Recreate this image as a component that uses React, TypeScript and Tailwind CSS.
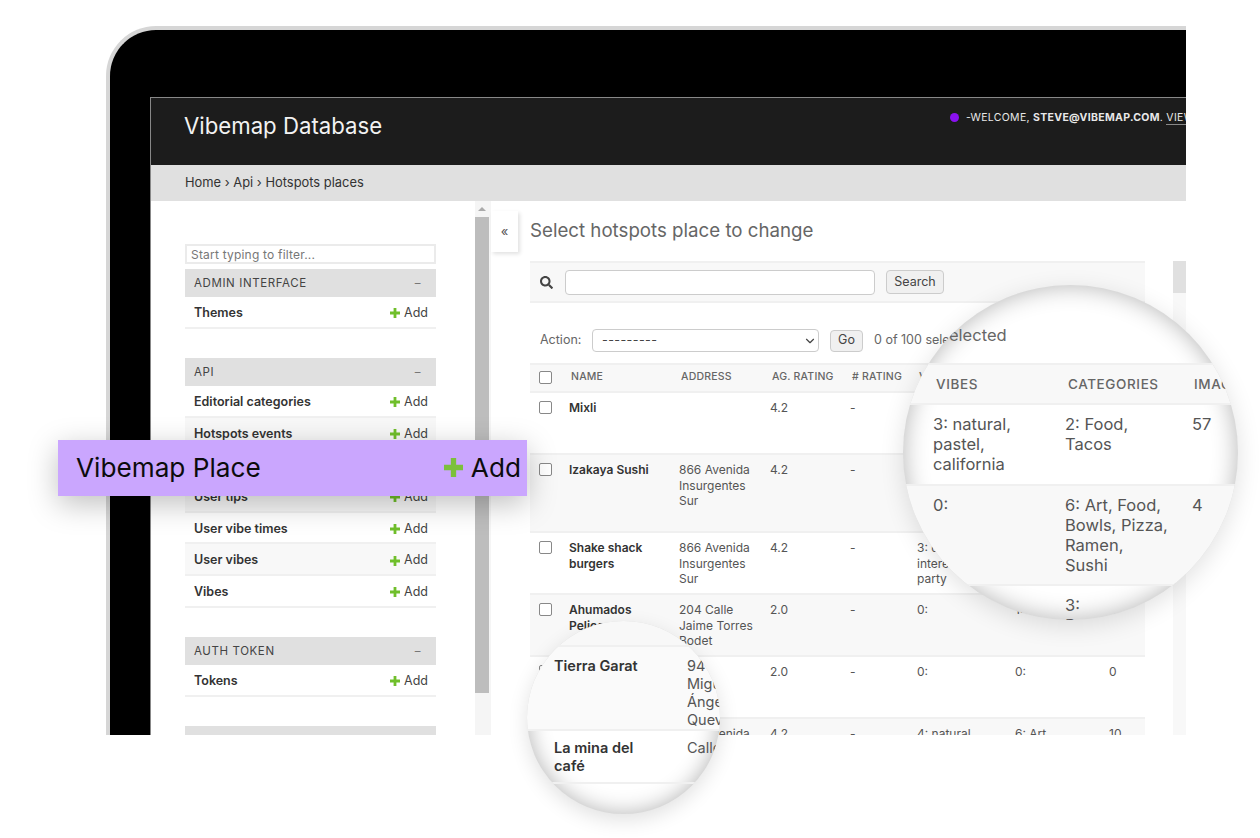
import { ChevronDown } from "lucide-react"
import { FaSearch } from "react-icons/fa"

type Row = {
  name: string[]
  address: string[]
  rating: string
  count: string
  vibes: string[]
  categories: string[]
  images: string
  height: string
  shaded: boolean
}

const rows: Row[] = [
  { name: ["Mixli"], address: [], rating: "4.2", count: "-", vibes: ["3: natural,", "pastel,", "california"], categories: ["2: Food,", "Tacos"], images: "57", height: "h-[62px]", shaded: false },
  { name: ["Izakaya Sushi"], address: ["866 Avenida", "Insurgentes", "Sur"], rating: "4.2", count: "-", vibes: ["0:"], categories: ["6: Art, Food,", "Bowls, Pizza,", "Ramen,", "Sushi"], images: "4", height: "h-[78px]", shaded: true },
  { name: ["Shake shack", "burgers"], address: ["866 Avenida", "Insurgentes", "Sur"], rating: "4.2", count: "-", vibes: ["3: dreamy,", "interesting,", "party"], categories: ["1: Food"], images: "3", height: "h-[62px]", shaded: false },
  { name: ["Ahumados", "Pelicanos"], address: ["204 Calle", "Jaime Torres", "Bodet"], rating: "2.0", count: "-", vibes: ["0:"], categories: ["1: Store,"], images: "0", height: "h-[62px]", shaded: true },
  { name: ["Tierra Garat"], address: [], rating: "2.0", count: "-", vibes: ["0:"], categories: ["0:"], images: "0", height: "h-[62px]", shaded: false },
  { name: ["La mina del", "café"], address: ["866 Avenida", "Insurgentes"], rating: "4.2", count: "-", vibes: ["4: natural,"], categories: ["6: Art,"], images: "10", height: "h-[62px]", shaded: true },
]

const sections = [
  { title: "ADMIN INTERFACE", items: ["Themes"] },
  { title: "API", items: ["Editorial categories", "Hotspots events", "Vibemap Place", "User tips", "User vibe times", "User vibes", "Vibes"] },
  { title: "AUTH TOKEN", items: ["Tokens"] },
  { title: "AUTHENTICATION", items: ["Groups"] },
]

const fontStack = "font-['Inter','Liberation_Sans',sans-serif]"

function Plus({ className }: { className: string }) {
  return (
    <svg viewBox="0 0 10 10" className={className}>
      <path d="M3.6 0h2.8v3.6H10v2.8H6.4V10H3.6V6.4H0V3.6h3.6z" fill="currentColor" />
    </svg>
  )
}

function Lines({ lines }: { lines: string[] }) {
  return (
    <>
      {lines.map((line) => (
        <div key={line}>{line}</div>
      ))}
    </>
  )
}

function Sidebar() {
  return (
    <div className="flex w-[340px] shrink-0">
      <div className="w-[324px] pl-[34px] pt-[43px]">
        <input
          placeholder="Start typing to filter..."
          className="block h-[20px] w-[251px] border-2 border-[#ebebeb] px-1 text-[12px] tracking-[0.2px] outline-none placeholder:text-[#777]"
        />
        <div className="mt-[5px] w-[251px]">
          {sections.map((section) => (
            <div key={section.title} className="mb-[29.3px]">
              <div className="flex h-[28px] items-center justify-between bg-[#e0e0e0] pl-[9px] pr-[15px] pt-[2px] text-[11.5px] tracking-[0.6px] text-[#444]">
                <span>{section.title}</span>
                <span className="text-[#777]">–</span>
              </div>
              {section.items.map((item, i) => (
                <div
                  key={item}
                  className={`flex h-[31.7px] items-center justify-between border-b-2 border-[#f0f0f0] pl-[9px] pr-[8px] pt-[3px] text-[12.5px] ${i % 2 === 1 ? "bg-[#f8f8f8]" : "bg-white"}`}
                >
                  <span className="font-semibold text-[#333]">{item}</span>
                  <span className="flex items-center gap-[4px] text-[#444]">
                    <Plus className="h-[10px] w-[10px] text-[#70bf2b]" />
                    Add
                  </span>
                </div>
              ))}
            </div>
          ))}
        </div>
      </div>
      <div className="flex h-[700px] w-[16px] flex-col items-start bg-[#f5f5f5]">
        <div className="ml-[3px] mt-[6px] h-0 w-0 border-x-[4px] border-b-[4px] border-x-transparent border-b-[#aaa]" />
        <div className="mt-[6px] h-[476px] w-[14px] bg-[#bdbdbd]" />
      </div>
    </div>
  )
}

function ChangeList() {
  return (
    <div className="relative flex-1 pl-[39px]">
      <div className="absolute left-0 top-[10px] flex h-[41px] w-[27px] items-center justify-center bg-white text-[13px] text-[#555] shadow-[2px_2px_4px_rgba(0,0,0,0.12)]">
        «
      </div>
      <h1 className="pt-[17px] text-[18.7px] leading-[25px] text-[#666]">Select hotspots place to change</h1>

      <div className="mt-[18px] flex h-[42px] w-[615px] items-center border-b-2 border-t-2 border-[#f0f0f0] bg-[#f8f8f8] pl-[10px]">
        <FaSearch className="h-[13px] w-[13px] text-[#444]" />
        <input className="ml-[12px] h-[25px] w-[310px] rounded-[4px] border border-[#ccc] bg-white outline-none" />
        <div className="ml-[11px] flex h-[24px] w-[58px] items-center justify-center rounded-[4px] border border-[#ccc] bg-[#f0f0f0] text-[12.5px] text-[#444]">
          Search
        </div>
      </div>

      <div className="mt-[26px] flex h-[23px] w-[615px] items-center pl-[10px] text-[12.5px] text-[#666]">
        <span className="w-[52px]">Action:</span>
        <div className="flex h-[23px] w-[227px] items-center justify-between rounded-[4px] border border-[#ccc] bg-white pl-[9px] pr-[1px] text-[#444]">
          <span className="tracking-[0.4px]">---------</span>
          <ChevronDown className="h-[14px] w-[14px]" />
        </div>
        <div className="ml-[11px] flex h-[22px] w-[33px] items-center justify-center rounded-[4px] border border-[#ccc] bg-[#f0f0f0] text-[#444]">
          Go
        </div>
        <span className="ml-[11px]">0 of 100 selected</span>
      </div>

      <div className="mt-[11px] w-[615px]">
        <div className="grid h-[30px] grid-cols-[39px_110px_91px_80px_67px_98px_94px_36px] items-center border-b-2 border-t-2 border-[#f0f0f0] bg-[#f8f8f8] pb-[2px] text-[10.5px] font-medium tracking-[0.2px] text-[#666]">
          <input type="checkbox" className="ml-[9px] h-[13px] w-[13px] appearance-none rounded-[2px] border border-[#888] bg-white" />
          <span className="pl-[2px]">NAME</span>
          <span className="pl-[2px]">ADDRESS</span>
          <span className="pl-[2px]">AG. RATING</span>
          <span className="pl-[2px]"># RATING</span>
          <span className="pl-[2px]">VIBES</span>
          <span className="pl-[2px]">CATEGORIES</span>
          <span className="pl-[2px]">IMAGES</span>
        </div>
        {rows.map((row) => (
          <div
            key={row.name[0]}
            className={`grid grid-cols-[39px_110px_91px_80px_67px_98px_94px_36px] border-b-2 border-[#f0f0f0] pt-[7px] text-[12px] leading-[15.5px] text-[#555] ${row.height} ${row.shaded ? "bg-[#f8f8f8]" : "bg-white"}`}
          >
            <input type="checkbox" className="ml-[9px] mt-[1px] h-[13px] w-[13px] appearance-none rounded-[2px] border border-[#888] bg-white" />
            <div className="font-semibold text-[#333]">
              <Lines lines={row.name} />
            </div>
            <div>
              <Lines lines={row.address} />
            </div>
            <div>{row.rating}</div>
            <div>{row.count}</div>
            <div>
              <Lines lines={row.vibes} />
            </div>
            <div>
              <Lines lines={row.categories} />
            </div>
            <div>{row.images}</div>
          </div>
        ))}
      </div>

      <div className="absolute right-0 top-[60px] h-[700px] w-[13px] bg-[#f8f8f8]">
        <div className="h-[32px] bg-[#e0e0e0]" />
      </div>
    </div>
  )
}

function MagnifierVibes() {
  return (
    <div className="absolute left-[903px] top-[285px] h-[335px] w-[335px] overflow-hidden rounded-full bg-white text-[16.5px] leading-[20px] text-[#555] shadow-[inset_0_0_24px_rgba(0,0,0,0.3),0_6px_24px_rgba(0,0,0,0.12)]">
      <div className="pl-[46px] pt-[39px] text-[16.5px] leading-[22px] text-[#666]">elected</div>
      <div className="mt-[17px] flex h-[42px] items-center whitespace-nowrap border-y-2 border-[#f0f0f0] bg-[#f8f8f8] pl-[33px] text-[13.5px] font-medium tracking-[0.6px] text-[#666]">
        <span className="w-[132px] shrink-0">VIBES</span>
        <span className="w-[126px] shrink-0">CATEGORIES</span>
        <span>IMAGES</span>
      </div>
      <div className="flex h-[81px] border-b-2 border-[#f0f0f0] pl-[30px] pt-[9px]">
        <div className="w-[132px]">
          <Lines lines={["3: natural,", "pastel,", "california"]} />
        </div>
        <div className="w-[127px]">
          <Lines lines={["2: Food,", "Tacos"]} />
        </div>
        <div>57</div>
      </div>
      <div className="flex h-[100px] border-b-2 border-[#f0f0f0] bg-[#f8f8f8] pl-[30px] pt-[9px]">
        <div className="w-[132px]">0:</div>
        <div className="w-[127px]">
          <Lines lines={["6: Art, Food,", "Bowls, Pizza,", "Ramen,", "Sushi"]} />
        </div>
        <div>4</div>
      </div>
      <div className="flex pl-[30px] pt-[9px]">
        <div className="w-[132px]" />
        <div className="w-[127px]">
          <Lines lines={["3:", "Bars,"]} />
        </div>
      </div>
    </div>
  )
}

function MagnifierName() {
  return (
    <div className="absolute left-[527px] top-[621px] h-[193px] w-[193px] overflow-hidden rounded-full bg-white text-[14.5px] leading-[18px] text-[#555] shadow-[inset_0_0_22px_rgba(0,0,0,0.3),0_6px_20px_rgba(0,0,0,0.12)]">
      <div className="h-[26px] border-b-2 border-[#f0f0f0] bg-[#f8f8f8]" />
      <div className="flex h-[84px] border-b-2 border-[#f0f0f0] bg-[#fafafa] pl-[27px] pt-[10px]">
        <div className="w-[133px] shrink-0 font-semibold text-[#333]">Tierra Garat</div>
        <div className="whitespace-nowrap">
          <Lines lines={["94", "Miguel", "Ángel", "Quevedo"]} />
        </div>
      </div>
      <div className="flex h-[53px] border-b-2 border-[#f0f0f0] pl-[27px] pt-[8px]">
        <div className="w-[133px] shrink-0 font-semibold text-[#333]">
          <Lines lines={["La mina del", "café"]} />
        </div>
        <div className="whitespace-nowrap">Calle</div>
      </div>
    </div>
  )
}

export default function App() {
  return (
    <div className={`relative h-[838px] w-[1260px] overflow-hidden bg-white ${fontStack}`}>
      <div className="ml-[106px] pt-[26px]">
        <div className="h-[709px] w-[1080px] overflow-hidden rounded-tl-[50px] border-l-4 border-t-4 border-[#d6d6d6] bg-black pl-[40px] pt-[67px]">
          <div className="h-[640px] w-[1036px] overflow-hidden border-l border-t border-[#888] bg-white">
            <div className="flex h-[67px] justify-between bg-[#1c1c1c] pl-[33px]">
              <div className="pt-[13px] text-[22.2px] leading-[30px] text-[#f2f2f2]">Vibemap Database</div>
              <div className="flex w-[236px] shrink-0 items-start overflow-hidden whitespace-nowrap pt-[13px] text-[10.5px] leading-[14px] tracking-[0.3px] text-[#e8e8e8]">
                <span className="mr-[7px] mt-[2px] h-[9px] w-[9px] shrink-0 rounded-full bg-[#8a11f0]" />
                <span>
                  -WELCOME, <b>STEVE@VIBEMAP.COM</b>. <span className="border-b border-[#888]">VIEW SITE</span>
                </span>
              </div>
            </div>
            <div className="flex h-[36px] items-center bg-[#e0e0e0] pl-[34px] text-[12.9px] text-[#333]">
              Home › Api › Hotspots places
            </div>
            <div className="flex">
              <Sidebar />
              <ChangeList />
            </div>
          </div>
        </div>
      </div>

      <div className="absolute left-[58px] top-[440px] flex h-[56px] w-[469px] items-center justify-between bg-[#caa6fe] pl-[18px] pr-[6px] text-[26.2px] text-[#0c0c0c] shadow-[0_8px_30px_rgba(0,0,0,0.25)]">
        <span>Vibemap Place</span>
        <span className="flex items-center gap-[8px]">
          <Plus className="h-[19px] w-[19px] text-[#7cc03b]" />
          Add
        </span>
      </div>

      <MagnifierVibes />
      <MagnifierName />
    </div>
  )
}
